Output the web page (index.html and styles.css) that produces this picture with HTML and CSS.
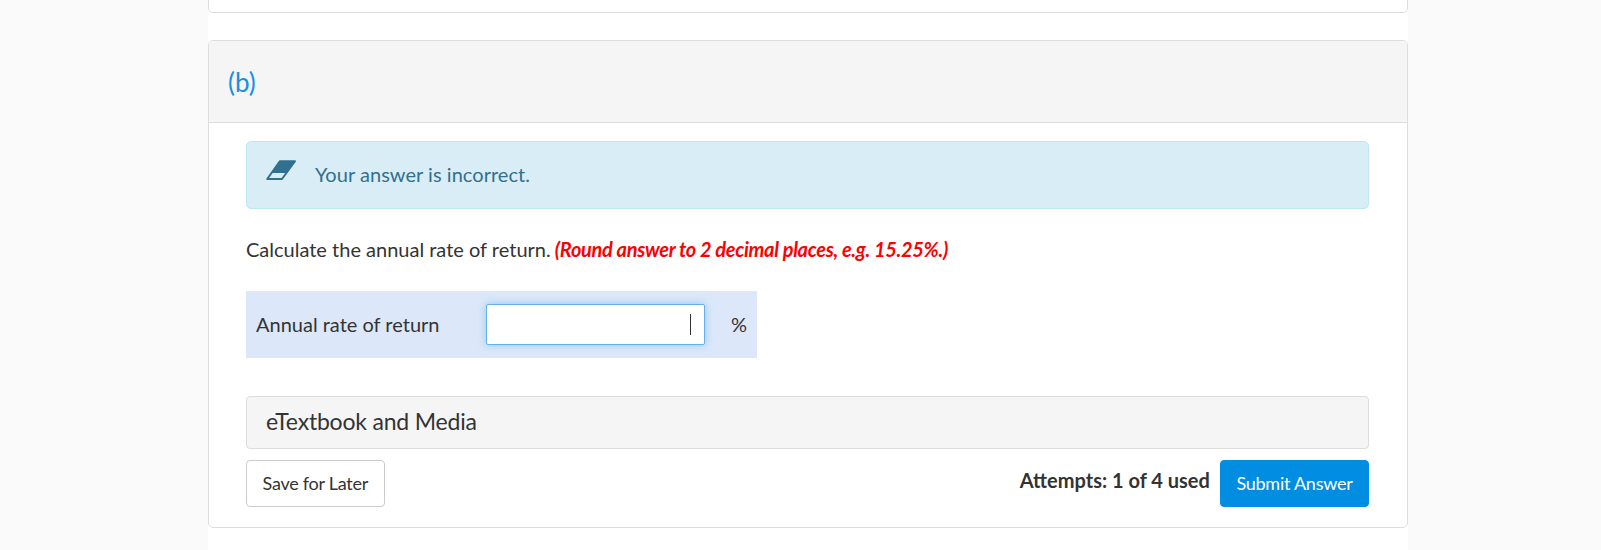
FILE: index.html
```html
<!DOCTYPE html>
<html lang="en">
<head>
    <meta charset="UTF-8">
    <title>Question part b</title>
    <link rel="stylesheet" href="styles.css">
</head>
<body>
    <div class="page">
        <div class="card-prev"></div>

        <div class="card">
            <div class="card-header">(b)</div>
            <div class="card-body">
                <div class="alert">
                    <svg class="eraser" width="30" height="20" viewBox="0 0 30 20">
                        <path d="M14 1.2H29L16 19H1.2Z" fill="none" stroke="#31708f" stroke-width="2" stroke-linejoin="round"/>
                        <path d="M14 1.2H29L20.3 13H5.3Z" fill="#31708f"/>
                    </svg>
                    <span>Your answer is incorrect.</span>
                </div>

                <p class="question">Calculate the annual rate of return. <em class="hint">(Round answer to 2 decimal places, e.g. 15.25%.)</em></p>

                <div class="answer-row">
                    <label for="rate">Annual rate of return</label>
                    <div class="answer-input">
                        <input type="text" id="rate" name="rate">
                        <span class="caret"></span>
                    </div>
                    <span class="unit">%</span>
                </div>

                <div class="media-panel">eTextbook and Media</div>

                <div class="actions">
                    <button type="button" class="btn">Save for Later</button>
                    <div class="actions-right">
                        <span class="attempts">Attempts: 1 of 4 used</span>
                        <button type="button" class="btn btn-primary">Submit Answer</button>
                    </div>
                </div>
            </div>
        </div>
    </div>
</body>
</html>
```

FILE: styles.css
```css
* {
    box-sizing: border-box;
    font-family: Lato, 'Open Sans', sans-serif;
}

html, body {
    height: 100%;
}

body {
    margin: 0;
    background-color: #fafafa;
    color: #333;
    overflow: hidden;
}

.page {
    width: 1200px;
    height: 100%;
    margin-left: 208px;
    background: white;
}

.card-prev {
    height: 13px;
    background: white;
    border: 1px solid #ddd;
    border-top: none;
    border-radius: 0 0 5px 5px;
    margin-bottom: 27px;
}

.card {
    height: 488px;
    background: white;
    border: 1px solid #ddd;
    border-radius: 5px;
}

.card-header {
    height: 82px;
    padding: 0 19px;
    display: flex;
    align-items: center;
    background: #f5f5f5;
    border-bottom: 1px solid #ddd;
    border-radius: 4px 4px 0 0;
    color: #1a8fe3;
    font-size: 26px;
}

.card-body {
    padding: 18px 38px 0 37px;
}

.alert {
    height: 68px;
    display: flex;
    align-items: center;
    gap: 19px;
    padding: 0 19px 2px;
    background: #d9edf7;
    border: 1px solid #bce8f1;
    border-radius: 5px;
    color: #31708f;
    font-size: 20px;
    letter-spacing: 0.04px;
}

.eraser {
    margin-bottom: 8px;
}

.question {
    margin: 28px 0 0;
    font-size: 20px;
    line-height: 24px;
}

.hint {
    margin-left: -1px;
    color: #f00;
    font-weight: 700;
    letter-spacing: -0.32px;
}

.answer-row {
    width: 511px;
    height: 67px;
    margin-top: 30px;
    display: flex;
    align-items: center;
    padding-left: 10px;
    background: #dce8f9;
    font-size: 20px;
}

.answer-row label {
    flex: none;
    width: 230px;
    margin-bottom: 2px;
}

.answer-input {
    flex: none;
    position: relative;
}

.answer-input input {
    display: block;
    width: 219px;
    height: 41px;
    background: white;
    border: 1px solid #66afe9;
    border-radius: 2px;
    box-shadow: 0 0 8px rgba(102, 175, 233, 0.6);
    outline: none;
}

.caret {
    position: absolute;
    top: 10px;
    right: 14px;
    width: 1px;
    height: 21px;
    background: #333;
}

.unit {
    margin-left: 26px;
    margin-bottom: 2px;
}

.media-panel {
    height: 53px;
    margin-top: 38px;
    padding: 0 19px 4px;
    display: flex;
    align-items: center;
    background: #f5f5f5;
    border: 1px solid #ddd;
    border-radius: 4px;
    font-size: 23px;
    letter-spacing: -0.2px;
}

.actions {
    display: flex;
    justify-content: space-between;
    margin-top: 11px;
}

.actions-right {
    display: flex;
    gap: 10px;
}

.attempts {
    margin-top: 8px;
    font-size: 20px;
    font-weight: 700;
}

.btn {
    height: 47px;
    padding: 0 15.5px 2px;
    background: white;
    color: #333;
    border: 1px solid #ccc;
    border-radius: 4px;
    font-size: 18px;
    letter-spacing: -0.25px;
    cursor: pointer;
}

.btn-primary {
    background: #008de2;
    border-color: #008de2;
    color: white;
}
```
